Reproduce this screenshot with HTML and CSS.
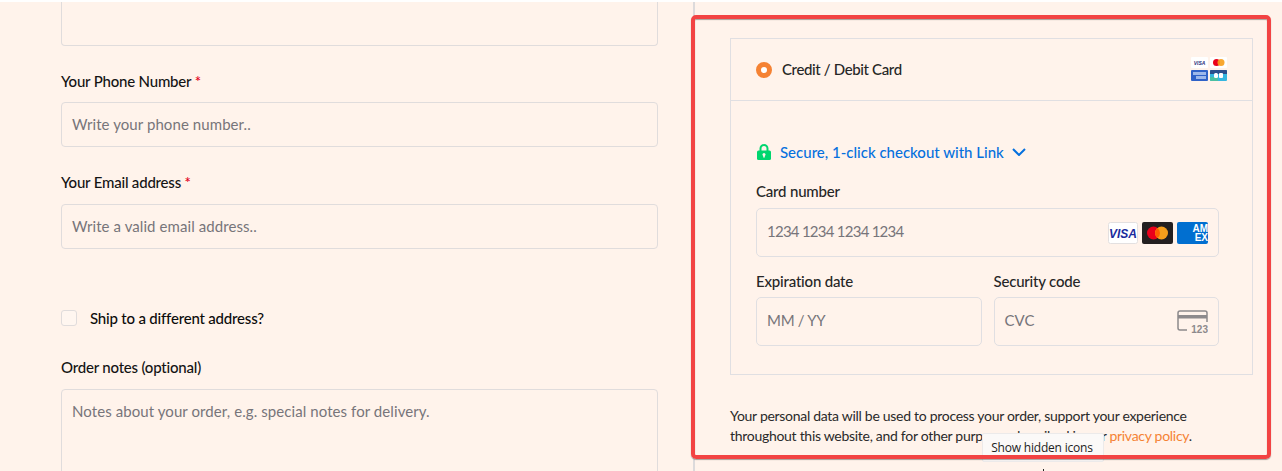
FILE: index.html
```html
<!DOCTYPE html>
<html lang="en">
<head>
<meta charset="utf-8">
<title>Checkout</title>
<link rel="stylesheet" href="styles.css">
</head>
<body>
<main class="page">
  <section class="billing">
    <div class="input input-cut"></div>
    <label class="label label-phone">Your Phone Number <span class="req">*</span></label>
    <div class="input"><span class="ph">Write your phone number..</span></div>
    <label class="label label-email">Your Email address <span class="req">*</span></label>
    <div class="input"><span class="ph">Write a valid email address..</span></div>
    <div class="ship"><span class="check"></span><span class="ship-text">Ship to a different address?</span></div>
    <label class="label label-notes">Order notes (optional)</label>
    <div class="input textarea"><span class="ph">Notes about your order, e.g. special notes for delivery.</span></div>
  </section>
  <section class="payment">
    <div class="pay-box">
      <div class="pay-head">
        <span class="radio"></span>
        <span class="pay-title">Credit / Debit Card</span>
        <svg class="mini-cards" width="36" height="24" viewBox="0 0 36 24" aria-hidden="true">
          <rect x="0" y="0" width="17" height="11" rx="1" fill="#fff"/>
          <text x="8.500" y="7.500" text-anchor="middle" class="mini-visa">VISA</text>
          <rect x="19" y="0" width="17" height="11" rx="1" fill="#fff"/>
          <circle cx="25.500" cy="5.500" r="3.500" fill="#eb001b"/>
          <circle cx="30" cy="5.500" r="3.500" fill="#f79e1b" opacity=".9"/>
          <rect x="0" y="13" width="17" height="11" rx="1" fill="#2f62c8"/>
          <rect x="2" y="15" width="13" height="3" fill="#9db8ea"/>
          <rect x="5" y="19" width="10" height="3" fill="#9db8ea"/>
          <rect x="19" y="13" width="17" height="11" rx="1" fill="#35b6e0"/>
          <path d="M19 14a1 1 0 0 1 1-1h15a1 1 0 0 1 1 1v3H19z" fill="#2b4f8c"/>
          <path d="M19 20h8v4h-7a1 1 0 0 1-1-1z" fill="#4cc0a0"/>
          <rect x="23" y="16" width="4" height="5" rx="1.500" fill="#fff"/>
          <rect x="28" y="16" width="4" height="5" rx="1" fill="#fff"/>
        </svg>
      </div>
      <div class="pay-body">
        <div class="link-row">
          <svg width="16" height="16" viewBox="0 0 16 16" aria-hidden="true">
            <path d="M4.500 7V4.500a3.500 3.500 0 0 1 7 0V7" fill="none" stroke="#00d66f" stroke-width="2"/>
            <rect x="1" y="6.500" width="14" height="9.500" rx="1.500" fill="#00d66f"/>
            <circle cx="8" cy="10.500" r="1.500" fill="#fff3eb"/>
            <rect x="7.200" y="10.500" width="1.600" height="3" fill="#fff3eb"/>
          </svg>
          <span class="link-text">Secure, 1-click checkout with Link</span>
          <svg width="14" height="8" viewBox="0 0 14 8" aria-hidden="true">
            <path d="M1 1l6 6 6-6" fill="none" stroke="#0570de" stroke-width="2"/>
          </svg>
        </div>
        <div class="field-label">Card number</div>
        <div class="field field-card">
          <span class="ph num">1234 1234 1234 1234</span>
          <span class="brands">
            <svg width="30" height="22" viewBox="0 0 30 22" aria-hidden="true">
              <rect x=".5" y=".5" width="29" height="21" rx="2" fill="#fff" stroke="#e3e0e0"/>
              <text x="15" y="16" text-anchor="middle" class="visa-text">VISA</text>
            </svg>
            <svg width="31" height="22" viewBox="0 0 31 22" aria-hidden="true">
              <rect width="31" height="22" rx="2" fill="#231f20"/>
              <circle cx="11.500" cy="11" r="6.500" fill="#eb001b"/>
              <circle cx="19.500" cy="11" r="6.500" fill="#f79e1b"/>
              <path d="M15.500 5.900a6.500 6.500 0 0 1 0 10.200a6.500 6.500 0 0 1 0-10.200z" fill="#ff5f00"/>
            </svg>
            <svg width="31" height="22" viewBox="0 0 31 22" aria-hidden="true">
              <rect width="31" height="22" rx="2" fill="#016fd0"/>
              <text x="31" y="10" text-anchor="end" class="amex-text">AM</text>
              <text x="31" y="19" text-anchor="end" class="amex-text">EX</text>
            </svg>
          </span>
        </div>
        <div class="split">
          <div class="col">
            <div class="field-label">Expiration date</div>
            <div class="field"><span class="ph date">MM / YY</span></div>
          </div>
          <div class="col">
            <div class="field-label">Security code</div>
            <div class="field field-cvc">
              <span class="ph">CVC</span>
              <svg width="31" height="24" viewBox="0 0 31 24" aria-hidden="true">
                <path d="M10 20H3a2 2 0 0 1-2-2V3a2 2 0 0 1 2-2h25a2 2 0 0 1 2 2v9" fill="none" stroke="#8d8a8c" stroke-width="1.500"/>
                <rect x="1" y="5" width="29" height="3.500" fill="#8d8a8c"/>
                <text x="31" y="22.500" text-anchor="end" class="cvc-text">123</text>
              </svg>
            </div>
          </div>
        </div>
      </div>
    </div>
    <p class="privacy">Your personal data will be used to process your order, support your experience throughout this website, and for other purposes described in our <a class="privacy-link">privacy policy</a>.</p>
  </section>
</main>
<div class="tooltip">Show hidden icons</div>
<div class="highlight"></div>
<div class="cursor-tip"></div>
</body>
</html>
```

FILE: styles.css
```css
* { box-sizing: border-box; }
html, body { margin: 0; height: 471px; overflow: hidden; background: #fff; }
body { font-family: Lato, "Open Sans", sans-serif; color: #1d1d1d; position: relative; }
.page {
  display: flex;
  height: 469px;
  margin-top: 2px;
  background: #fff3eb;
  overflow: hidden;
}
.billing { width: 693px; flex: none; padding: 0 35px 0 61px; }
.label { display: block; font-size: 15px; line-height: 20px; color: #141414; letter-spacing: -.2px; font-weight: 500; }
.label-phone { margin-top: 25px; margin-bottom: 11px; }
.label-email { margin-top: 25px; margin-bottom: 12px; }
.label-notes { margin-top: 29px; margin-bottom: 12px; }
.req { color: #e2001a; }
.input {
  height: 45px;
  border: 1px solid #e0dcdc;
  border-radius: 4px;
  padding: 0 10px;
  display: flex;
  align-items: center;
}
.input-cut { height: 44px; border-top: 0; border-radius: 0 0 4px 4px; }
.textarea { height: 140px; align-items: flex-start; padding-top: 11px; line-height: 20px; border-radius: 4px 4px 0 0; }
.ph { color: #77757a; font-size: 15px; letter-spacing: .08px; }
.input .ph { margin-bottom: 2px; }
.textarea .ph { margin-bottom: 0; }
.field .ph { margin-bottom: 4px; }
.field .num { letter-spacing: -.75px; }
.field .date { letter-spacing: -.3px; }
.ship { display: flex; align-items: center; gap: 13px; margin-top: 59px; height: 20px; }
.check { width: 16px; height: 16px; border: 1px solid #e0dcdc; border-radius: 3px; background: #fff6f0; }
.ship-text { font-size: 15px; color: #0c0c0c; font-weight: 500; letter-spacing: -.2px; }
.payment {
  flex: 1;
  border-left: 2px solid #dcdadb;
  padding: 36px 29px 0 35px;
}
.pay-box { border: 1px solid #e0dfe2; }
.pay-head {
  height: 62px;
  display: flex;
  align-items: center;
  padding: 0 25px;
  border-bottom: 1px solid #e0dfe2;
}
.radio { width: 16px; height: 16px; border-radius: 50%; border: 5px solid #f58233; background: #fff; }
.pay-title { margin: 0 0 2px 10px; font-size: 15px; color: #262626; flex: 1; letter-spacing: -.37px; font-weight: 500; }
.mini-cards { display: block; margin-bottom: 1px; }
.mini-visa { font: italic 700 5px "Liberation Sans", sans-serif; fill: #2a2f7d; }
.pay-body { padding: 41px 33px 28px 25px; }
.link-row { display: flex; align-items: center; height: 20px; font-size: 15px; color: #0570de; font-weight: 500; }
.link-row svg { display: block; flex: none; }
.link-text { margin-left: 8px; margin-right: 8px; }
.field-label { font-size: 15px; line-height: 20px; color: #262626; margin-bottom: 6px; letter-spacing: -.2px; font-weight: 500; }
.link-row + .field-label { margin-top: 19px; margin-bottom: 7px; }
.field {
  height: 49px;
  border: 1px solid #e0dfe2;
  border-radius: 5px;
  padding: 0 10px;
  display: flex;
  align-items: center;
  justify-content: space-between;
}
.brands { display: flex; gap: 4px; }
.brands svg { display: block; }
.split { display: flex; gap: 12px; margin-top: 14px; }
.col { flex: 1; min-width: 0; }
.visa-text { font: italic 800 12px "Liberation Sans", sans-serif; fill: #1a2b9c; }
.amex-text { font: 700 10px "Liberation Sans", sans-serif; fill: #fff; }
.cvc-text { font: 700 10px "Liberation Sans", sans-serif; fill: #8d8a8c; }
.privacy { margin: 31px 0 0; font-size: 14px; line-height: 20px; color: #2a2a2a; width: 480px; letter-spacing: -.29px; }
.privacy-link { color: #f58233; }
.tooltip {
  position: absolute;
  left: 982px; top: 433px;
  width: 122px; height: 29px;
  padding: 6px 2px 0 0;
  text-align: center;
  background: #fbf9f8;
  border: 1px solid #eceaea;
  border-radius: 2px;
  font: 12px/16px "Open Sans", sans-serif;
  letter-spacing: -.2px;
  color: #222;
}
.highlight {
  position: absolute;
  left: 691px; top: 15px;
  width: 580px; height: 444px;
  border: 4px solid #f24343;
  border-radius: 5px;
  box-shadow: 0 1px 1px rgba(0,0,0,.35), inset 0 1px 1px rgba(0,0,0,.35);
}
.cursor-tip {
  position: absolute;
  left: 1043px; top: 469px;
  width: 1px; height: 2px;
  background: #222;
}
```
